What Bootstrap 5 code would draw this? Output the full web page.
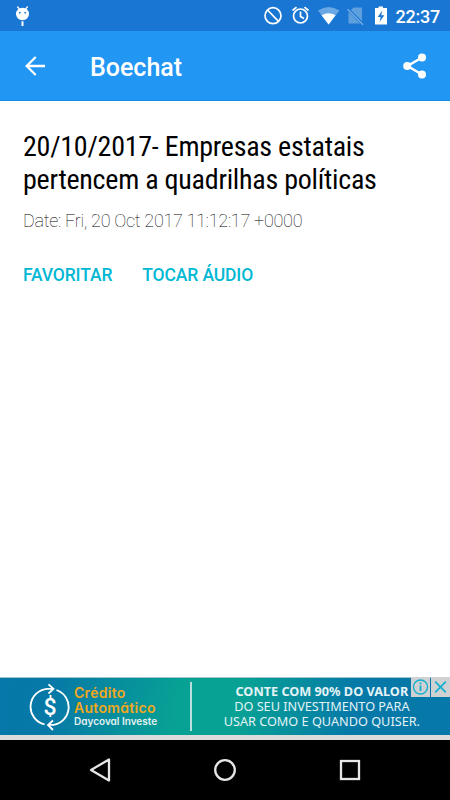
<!DOCTYPE html>
<html lang="pt-BR">
<head>
<meta charset="utf-8">
<meta name="viewport" content="width=device-width, initial-scale=1">
<title>Boechat</title>
<link href="https://cdn.jsdelivr.net/npm/bootstrap@5.3.0/dist/css/bootstrap.min.css" rel="stylesheet">
<style>
body{font-family:Roboto,"Liberation Sans",sans-serif;width:450px;height:800px;overflow:hidden;background:#fff}
svg{display:block;flex:none}
.status-strip{height:31px;background:#1976d2;padding:0 10px 0 14px}
.status-icons{margin-right:1px}
.clock{font-size:18px;font-weight:500;line-height:31px;letter-spacing:-.25px;padding-top:1px}
.app-header{height:70px;background:#2196f3;border-bottom:1px solid #148cec;padding:0 22px 0 24px}
.app-title{font-size:25px;font-weight:500;line-height:70px;margin-left:44px;padding-top:4px}
.article{padding:29px 23px 0}
.headline{font-family:"Roboto Condensed",Roboto,sans-serif;font-size:28px;font-weight:400;line-height:33px;letter-spacing:-.25px;color:#000;white-space:nowrap}
.date-line{font-size:18px;font-weight:100;line-height:24px;color:#000;margin-top:13px;white-space:nowrap;letter-spacing:-.27px}
.action{font-size:17.5px;font-weight:500;line-height:24px;color:#00b8d4;white-space:nowrap;letter-spacing:-.13px}
.actions{margin-top:30px;gap:30px}
.ad{height:58px;background:linear-gradient(100deg,#0678a9 0%,#0779a7 12%,#07a294 40%,#07a294 53%,#0679a8 78%,#0678a9 100%);border-top:1px solid #9fc6cf}
.ad-brand{font-family:Inter,Lato,sans-serif;font-feature-settings:"cv11";font-weight:600;color:#f2a71d;font-size:14px;line-height:15px;letter-spacing:.3px;margin-left:4px;width:104px}
.ad-sub{font-size:10px;line-height:13px;letter-spacing:0;color:#e5f2f2}
.ad-rule{width:2px;height:49px;background:#b8e0dc;margin-left:14px}
.ad-copy{font-family:"Noto Sans","Open Sans",sans-serif;font-size:12.7px;line-height:15px;color:#e4f3f6;width:262px;margin-left:2px;margin-top:-1px;white-space:nowrap}
.ad-badges{right:0;top:-1px;gap:1px}
.ad-badges span{width:19px;height:20px;background:#cfd1d2}
.ad-gap{height:5px;background:#dcdcdc}
.softkeys{height:60px;background:#000;padding:0 89px}
</style>
</head>
<body class="d-flex flex-column m-0">
<div class="status-strip d-flex align-items-center text-white">
  <svg width="17" height="22" viewBox="0 0 17 22" fill="#fff"><path d="M3.300 1.500l2.500 3M13.700 1.500l-2.500 3" stroke="#fff" stroke-width="1.200"/><ellipse cx="8.500" cy="9" rx="6.500" ry="6.200"/><circle cx="5.800" cy="7.700" r=".9" fill="#1976d2"/><circle cx="11.200" cy="7.700" r=".9" fill="#1976d2"/><path d="M7.500 16.300h2V21h-2z"/></svg>
  <div class="d-flex align-items-center ms-auto">
    <svg class="status-icons" width="132" height="24" viewBox="263 4 132 24" fill="none" stroke="#fff">
      <g stroke-width="1.700"><circle cx="273" cy="15.700" r="8"/><path d="M267.500 10l11 11.400"/></g>
      <g stroke-width="1.700"><circle cx="300.500" cy="16" r="7"/><path d="M300.500 11.500V16.500l3.500 2M292.500 10.500l4-3.300M308.500 10.500l-4-3.300"/></g>
      <path d="M318 10.500Q328.500 3.500 339.500 10.500L328.600 24.500Z" fill="#69a7e5" stroke="none"/><path d="M321.500 15.200Q328.500 11.300 335.600 15.200L328.600 24.500Z" fill="#fff" stroke="none"/>
      <path d="M353.500 7.500H362V23.500H348.500V12.500Z" fill="#5e9fde" stroke="none"/><path d="M347 8.200L363 24.400" stroke="#1976d2" stroke-width="3"/><path d="M347.500 9.200L363 24.700" stroke="#76aee7" stroke-width="1.400"/>
      <path d="M375 8h3.500V6.500h4.500V8h4v16.500h-12z" fill="#fff" stroke="none"/><path d="M382.300 10.500l-4.600 6.500h3l-1.200 5 4.900-6.700h-3.200z" fill="#1976d2" stroke="none"/>
    </svg>
    <span class="clock">22:37</span>
  </div>
</div>
<header class="app-header d-flex align-items-center text-white">
  <svg width="22" height="22" viewBox="0 0 22 22" fill="none" stroke="#fff" stroke-width="2.300"><path d="M21 11H3M11.700 2L2.700 11l9 9"/></svg>
  <span class="app-title">Boechat</span>
  <svg class="ms-auto" width="26" height="28" viewBox="0 0 26 28" fill="#fff"><path d="M20 5.500L5.500 14 20 22.500" fill="none" stroke="#fff" stroke-width="2.500"/><circle cx="20" cy="5.500" r="4"/><circle cx="5.200" cy="14" r="4"/><circle cx="20" cy="22.500" r="4"/></svg>
</header>
<main class="article flex-grow-1">
  <h1 class="headline mb-0">20/10/2017- Empresas estatais<br>pertencem a quadrilhas políticas</h1>
  <div class="date-line">Date: Fri, 20 Oct 2017 11:12:17 +0000</div>
  <div class="actions d-flex"><a class="action text-decoration-none">FAVORITAR</a><a class="action text-decoration-none">TOCAR ÁUDIO</a></div>
</main>
<section class="ad d-flex align-items-center position-relative">
  <svg class="ms-4" width="46" height="50" viewBox="23.500 681.500 46 50" fill="none" stroke="#fff" stroke-width="1.800"><path d="M44 723.800A18 18 0 0 1 47 688.300H52.500M48 683.800L53 688.300 48 693M56 689.500A18 18 0 0 1 53 724.300H48M52.500 720L47.500 724.500 52.500 729.500"/><text x="49.600" y="714.500" text-anchor="middle" font-family="Roboto, sans-serif" font-size="23" font-weight="500" fill="#fff" stroke="none">$</text></svg>
  <div class="ad-brand">Crédito<br>Automático<div class="ad-sub">Daycoval Investe</div></div>
  <div class="ad-rule"></div>
  <div class="ad-copy text-center"><b>CONTE COM 90% DO VALOR</b><br>DO SEU INVESTIMENTO PARA<br>USAR COMO E QUANDO QUISER.</div>
  <div class="ad-badges position-absolute d-flex">
    <span><svg width="19" height="20" viewBox="0 0 19 20" fill="none" stroke="#12b0d0" stroke-width="1.300"><circle cx="9.500" cy="10" r="7"/><path d="M9.500 8.500v5.500M9.500 5.500v1.700" stroke-width="1.800"/></svg></span>
    <span><svg width="19" height="20" viewBox="0 0 19 20" fill="none" stroke="#12b0d0" stroke-width="1.700"><path d="M4.200 4.700l10.600 10.600M14.800 4.700L4.200 15.300"/></svg></span>
  </div>
</section>
<div class="ad-gap"></div>
<nav class="softkeys d-flex align-items-center justify-content-between">
  <svg width="22" height="26" viewBox="0 0 22 26" fill="none" stroke="#e6e6e6" stroke-width="2.300" stroke-linejoin="round"><path d="M20 2.500v21L2 13z"/></svg>
  <svg width="24" height="24" viewBox="0 0 24 24" fill="none" stroke="#e6e6e6" stroke-width="2.300"><circle cx="12" cy="12" r="9.800"/></svg>
  <svg width="22" height="22" viewBox="0 0 22 22" fill="none" stroke="#e6e6e6" stroke-width="2.300"><rect x="2" y="2" width="18" height="18"/></svg>
</nav>
<script src="https://cdn.jsdelivr.net/npm/bootstrap@5.3.0/dist/js/bootstrap.bundle.min.js"></script>
</body>
</html>
